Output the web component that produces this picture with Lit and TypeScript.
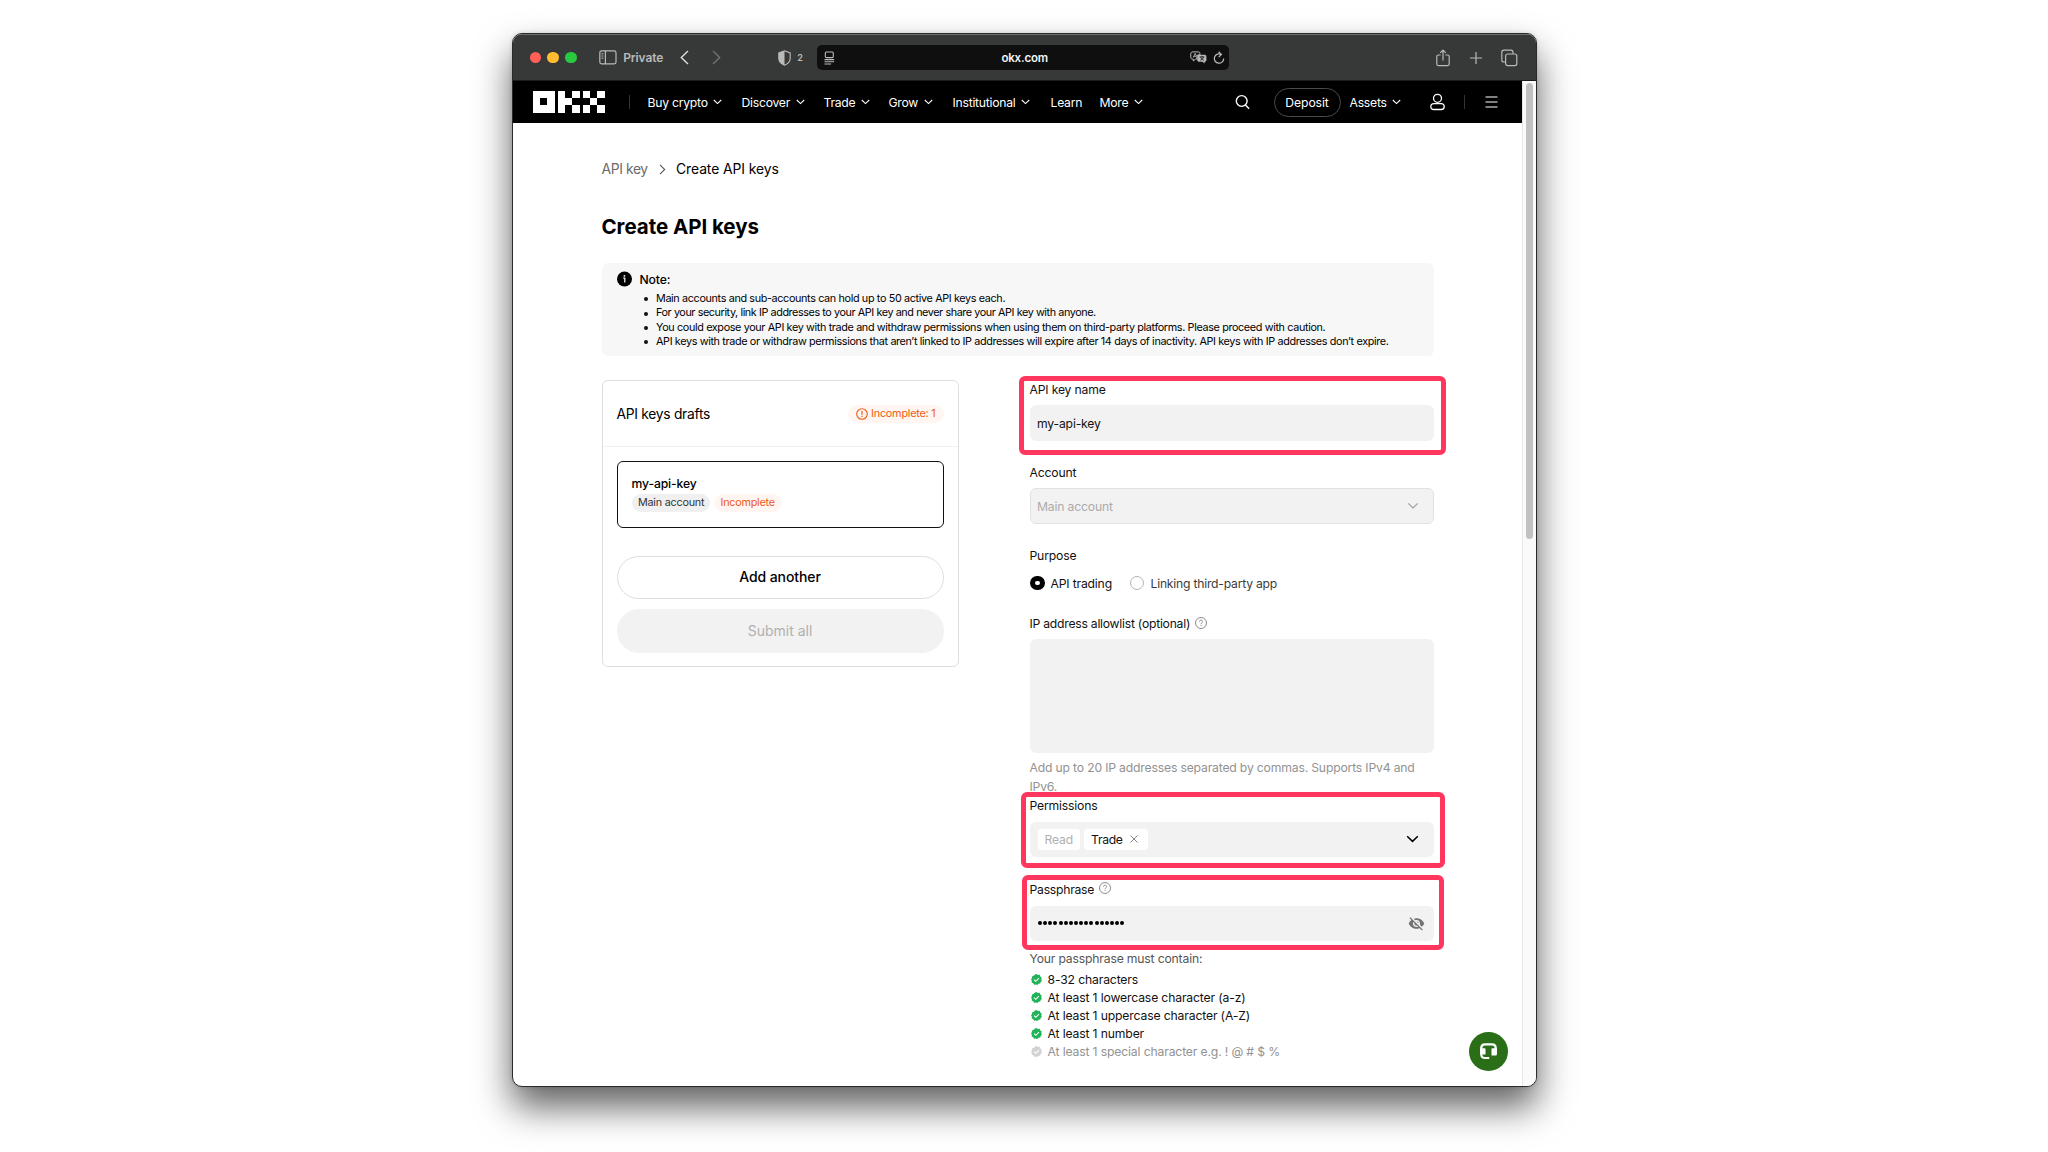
import { LitElement, html, css } from "lit";
import { customElement, property } from "lit/decorators.js";
import { classMap } from "lit/directives/class-map.js";

const NAV = [
  { label: "Buy crypto", menu: true, cls: "buy" },
  { label: "Discover", menu: true, cls: "discover" },
  { label: "Trade", menu: true, cls: "trade" },
  { label: "Grow", menu: true, cls: "grow" },
  { label: "Institutional", menu: true, cls: "inst" },
  { label: "Learn", menu: false, cls: "learn" },
  { label: "More", menu: true, cls: "more" },
];

const NOTES = [
  "Main accounts and sub-accounts can hold up to 50 active API keys each.",
  "For your security, link IP addresses to your API key and never share your API key with anyone.",
  "You could expose your API key with trade and withdraw permissions when using them on third-party platforms. Please proceed with caution.",
  "API keys with trade or withdraw permissions that aren’t linked to IP addresses will expire after 14 days of inactivity. API keys with IP addresses don’t expire.",
];

const RULES = [
  { text: "8-32 characters", met: true },
  { text: "At least 1 lowercase character (a-z)", met: true },
  { text: "At least 1 uppercase character (A-Z)", met: true },
  { text: "At least 1 number", met: true },
  { text: "At least 1 special character e.g. ! @ # $ %", met: false },
];

const chevron = html`<svg class="chev" viewBox="0 0 9 6" width="9" height="6"><path d="M.8 1 4.5 4.6 8.2 1" fill="none" stroke="currentColor" stroke-width="1.1"/></svg>`;

const help = html`<svg class="help" viewBox="0 0 12 12" width="12" height="12"><circle cx="6" cy="6" r="5.5" fill="none" stroke="#808080" stroke-width=".9"/><path d="M4.5 4.8c0-1 .6-1.6 1.5-1.6s1.6.5 1.6 1.4c0 1.1-1.5 1.1-1.5 2.2" fill="none" stroke="#808080" stroke-width=".9"/><rect x="5.6" y="7.8" width="1" height="1" fill="#808080"/></svg>`;

/* Safari toolbar */
@customElement("browser-toolbar")
export class BrowserToolbar extends LitElement {
  static styles = css`
    :host { display: flex; align-items: center; height: 45px; background: #373938; color: #b9bab9; border-top: 1px solid #6c6e6d; border-bottom: 1px solid #1c1c1c; box-sizing: content-box; }
    svg { display: block; flex: none; }
    .dots { display: flex; gap: 6.5px; margin-left: 17px; }
    .dot { width: 11.4px; height: 11.4px; border-radius: 50%; }
    .red { background: #ff5f57; }
    .yellow { background: #febc2e; }
    .green { background: #28c840; }
    .sidebar { margin-left: 22px; }
    .private { width: 42px; margin-left: 6.5px; font-size: 12px; font-weight: 600; letter-spacing: -0.12px; }
    .back { margin-left: 15px; color: #dcdcdc; }
    .fwd { margin-left: 23px; color: #717372; }
    .shield { margin-left: 57px; }
    .count { margin-left: 6px; width: 7px; font-size: 9px; font-weight: 600; }
    .url { display: flex; align-items: center; justify-content: space-between; width: 412px; height: 25px; margin-left: 13px; padding: 0 4px 0 7px; box-sizing: border-box; border-radius: 5px; background: #0e0f0e; }
    .host { flex: 1; padding-left: 24px; text-align: center; font-size: 11.5px; font-weight: 600; letter-spacing: -0.2px; color: #f4f4f4; }
    .tools { display: flex; align-items: center; gap: 6px; }
    .share { margin-left: 207px; }
    .plus { margin-left: 19.5px; }
    .tabs { margin-left: 19.5px; }
  `;
  render() {
    return html`
      <div class="dots"><i class="dot red"></i><i class="dot yellow"></i><i class="dot green"></i></div>
      <svg class="sidebar" width="18" height="15" viewBox="0 0 18 15" fill="none" stroke="currentColor" stroke-width="1.2"><rect x=".8" y=".9" width="16.2" height="13" rx="1.8"/><path d="M6.4 1v13"/><path d="M2.4 3.8h2M2.4 6h2M2.4 8.2h2" stroke-width="1"/></svg>
      <span class="private">Private</span>
      <svg class="back" width="9" height="15" viewBox="0 0 9 15" fill="none" stroke="currentColor" stroke-width="1.4"><path d="M8 1 1.3 7.5 8 14"/></svg>
      <svg class="fwd" width="9" height="15" viewBox="0 0 9 15" fill="none" stroke="currentColor" stroke-width="1.4"><path d="M1 1 7.7 7.5 1 14"/></svg>
      <svg class="shield" width="13" height="16" viewBox="0 0 13 16"><path d="M6.5.8 12.2 3v5.2c0 3.4-2.6 5.6-5.7 7C3.4 13.8.8 11.6.8 8.2V3z" fill="none" stroke="currentColor" stroke-width="1.1"/><path d="M6.5.8.8 3v5.2c0 3.4 2.6 5.6 5.7 7z" fill="currentColor"/></svg>
      <span class="count">2</span>
      <div class="url">
        <svg width="11" height="14" viewBox="0 0 11 14" fill="none" stroke="currentColor" stroke-width="1.1"><rect x="1.3" y="1" width="8" height="5.6" rx="1"/><path d="M.5 8.6h9.7M.5 10.8h9.7M.5 13h6.6"/></svg>
        <span class="host">okx.com</span>
        <div class="tools">
          <svg width="17" height="13" viewBox="0 0 17 13"><path d="M3 .9h5.2c1.2 0 1.700.6 1.700 1.600v1.300H8.600c-1.200 0-1.800.6-1.800 1.800v2.600H5.400L3.300 10V8.200C1.600 8.200.8 7.600.8 6.300V2.800C.8 1.500 1.600.9 3 .9z" fill="none" stroke="currentColor"/><path d="M3.200 6.600 5.200 2.400l1.300 2.800M3.900 5.300h2.300" fill="none" stroke="currentColor" stroke-width=".9"/><path d="M9.200 3.800h5.200c1.300 0 2 .7 2 1.900v3.200c0 1.200-.7 1.800-1.800 1.800v1.900l-2.200-1.900H9.200c-1.200 0-1.900-.6-1.900-1.800V5.700c0-1.200.7-1.900 1.900-1.900z" fill="currentColor"/><path d="M9.600 5.900h4.800M12 4.900v1M10.200 9.300c1.800-.6 2.800-1.700 3.200-3.400M10.600 6.200c.6 1.500 1.600 2.500 3.300 3.100" fill="none" stroke="#0e0f0e" stroke-width=".8"/></svg>
          <svg width="12" height="14" viewBox="0 0 12 14" fill="none" stroke="currentColor" stroke-width="1.2"><path d="M8.300 3.400A4.700 4.700 0 1 0 10.700 7.500"/><path d="M5.600.8 8.400 3.500 5.700 6.200"/></svg>
        </div>
      </div>
      <svg class="share" width="14" height="18" viewBox="0 0 14 18" fill="none" stroke="currentColor" stroke-width="1.2"><path d="M4.600 6H2.400C1.300 6 .8 6.500.8 7.500v7.600c0 1 .5 1.500 1.600 1.500h9.200c1.100 0 1.600-.5 1.600-1.500V7.500c0-1-.5-1.500-1.600-1.500H9.400"/><path d="M7 11.500V1.300M4.200 3.900 7 1.100l2.800 2.800"/></svg>
      <svg class="plus" width="12" height="12" viewBox="0 0 12 12" stroke="currentColor" stroke-width="1.2"><path d="M6 0v12M0 6h12"/></svg>
      <svg class="tabs" width="17" height="18" viewBox="0 0 17 18" fill="none" stroke="currentColor" stroke-width="1.2"><rect x="4.600" y="5" width="11.200" height="11.600" rx="2"/><path d="M4.400 13H3c-1.500 0-2.200-.7-2.200-2.100V3.200C.8 1.800 1.500 1.100 3 1.100h6.800c1.500 0 2.200.7 2.200 2.100v1.500"/></svg>
    `;
  }
}

/* Site navigation bar */
@customElement("site-nav")
export class SiteNav extends LitElement {
  static styles = css`
    :host { display: flex; align-items: center; height: 42px; background: #000; color: #fff; font-size: 12.2px; letter-spacing: -0.25px; }
    svg { display: block; flex: none; }
    .logo { margin-left: 20.5px; }
    .bar { flex: none; width: 1px; height: 14px; background: #333; }
    .bar.first { margin: 0 17.5px 0 24px; }
    .item { display: flex; align-items: center; gap: 5.5px; white-space: nowrap; flex: none; }
    .buy { width: 94px; } .discover { width: 82px; } .trade { width: 65px; } .grow { width: 64px; }
    .inst { width: 98px; } .learn { width: 49px; } .more { width: 42px; }
    .search { margin-left: 93px; }
    .deposit { display: flex; align-items: center; justify-content: center; box-sizing: border-box; width: 67px; height: 29px; margin-left: 24px; border: 1px solid #4a4a4a; border-radius: 15px; letter-spacing: -0.1px; }
    .assets { width: 52px; margin-left: 9px; }
    .user { margin-left: 28px; }
    .bar.last { margin: 0 20.5px 0 19px; }
  `;
  render() {
    return html`
      <svg class="logo" width="72" height="22" viewBox="0 0 72 22" fill="#fff" shape-rendering="crispEdges"><path fill-rule="evenodd" d="M0 0h21.600v21.600H0zM7.200 7.200v7.200h7.200V7.200z"/><path d="M25 0h7.200v7.200h7.200v7.200h-7.200v7.200H25zM39.400 0h7.200v7.200h-7.200zM39.400 14.400h7.200v7.200h-7.200z"/><path d="M50 0h7.200v7.200H50zM64.400 0h7.200v7.200h-7.200zM57.200 7.200h7.200v7.200h-7.200zM50 14.400h7.200v7.200H50zM64.400 14.400h7.200v7.200h-7.200z"/></svg>
      <i class="bar first"></i>
      ${NAV.map((n) => html`<span class="item ${n.cls}">${n.label}${n.menu ? chevron : ""}</span>`)}
      <svg class="search" width="15" height="16" viewBox="0 0 15 16" fill="none" stroke="#fff" stroke-width="1.4"><circle cx="6.700" cy="7" r="5.400"/><path d="m10.500 11 3.600 3.700"/></svg>
      <span class="deposit">Deposit</span>
      <span class="item assets">Assets${chevron}</span>
      <svg class="user" width="15" height="18" viewBox="0 0 15 18" fill="none" stroke="#fff" stroke-width="1.3"><circle cx="7.500" cy="5.300" r="4"/><path d="M4 10.600h7c2 0 3.200 1.200 3.200 3.100S13 16.500 11.300 16.500H3.700C2 16.500.8 15.600.8 13.700S2 10.600 4 10.600z"/></svg>
      <i class="bar last"></i>
      <svg width="13" height="14" viewBox="0 0 13 14" stroke="#fff" stroke-width="1.2"><path d="M.5 2h12M.5 7h12M.5 12h12"/></svg>
    `;
  }
}

/* Left-hand card with the list of key drafts */
@customElement("drafts-card")
export class DraftsCard extends LitElement {
  static styles = css`
    :host { display: block; box-sizing: border-box; width: 357px; height: 287px; border: 1px solid #dedede; border-radius: 6px; }
    .head { display: flex; align-items: center; justify-content: space-between; height: 65px; padding: 0 14px; border-bottom: 1px solid #eef1f5; font-size: 13.8px; letter-spacing: -0.27px; }
    .chip { display: inline-flex; align-items: center; box-sizing: border-box; height: 18px; border-radius: 9px; font-size: 10.8px; letter-spacing: -0.23px; white-space: nowrap; }
    .orange { background: #fff6f2; color: #ee5a14; }
    .count { gap: 3px; width: 95.5px; padding-left: 8px; letter-spacing: -0.2px; }
    .body { padding: 14px 14px 0; }
    .draft { box-sizing: border-box; height: 66.5px; padding: 13px 14px; border: 1px solid #111; border-radius: 6px; }
    .name { font-size: 12.2px; font-weight: 500; letter-spacing: -0.14px; line-height: 18px; }
    .tags { display: flex; gap: 4px; margin-top: 0.5px; }
    .main { width: 78px; padding-left: 6.5px; background: #f0f0f0; color: #333; }
    .inc { width: 68px; padding-left: 7px; }
    .btn { display: flex; align-items: center; justify-content: center; box-sizing: border-box; height: 43.5px; padding-bottom: 1.5px; border-radius: 22px; font-size: 14px; }
    .add { margin-top: 28px; border: 1px solid #dedede; font-weight: 500; letter-spacing: -0.08px; }
    .submit { margin-top: 10px; background: #f2f2f2; color: #b0b0b0; }
  `;
  render() {
    return html`
      <div class="head">
        <span>API keys drafts</span>
        <span class="chip orange count">
          <svg width="12" height="12" viewBox="0 0 12 12" fill="none" stroke="currentColor"><circle cx="6" cy="6" r="5.300" stroke-width="1.1"/><path d="M6 3v3.700M6 7.800v1.200" stroke-width="1.2"/></svg>Incomplete: 1</span>
      </div>
      <div class="body">
        <div class="draft">
          <div class="name">my-api-key</div>
          <div class="tags"><span class="chip main">Main account</span><span class="chip orange inc">Incomplete</span></div>
        </div>
        <div class="btn add">Add another</div>
        <div class="btn submit">Submit all</div>
      </div>
    `;
  }
}

@customElement("rule-item")
export class RuleItem extends LitElement {
  @property({ type: Boolean }) met = false;
  @property() text = "";
  static styles = css`
    :host { display: flex; align-items: center; gap: 5.5px; height: 17.9px; padding-left: 1.5px; letter-spacing: -0.15px; }
    svg { display: block; width: 11px; height: 11px; }
    .on { color: #1fb457; }
    .off { color: #d2d2d2; }
    .muted { color: #929292; }
  `;
  render() {
    return html`<svg class=${classMap({ on: this.met, off: !this.met })} viewBox="0 0 12 12"><path d="M6 0 7.600 1 9.400.9 10.200 2.600 11.600 3.800 11.300 5.600 11.900 7.300 10.600 8.600 10.100 10.400 8.300 10.700 6.900 12 5.200 11.400 3.400 11.600 2.400 10.100.8 9.200.9 7.400 0 5.800 1.100 4.300 1.300 2.500 3.100 1.900 4.300.5z" fill="currentColor"/><path d="M3.300 6.200 5.200 8 8.700 4.400" fill="none" stroke="#fff" stroke-width="1.2"/></svg><span class=${classMap({ muted: !this.met })}>${this.text}</span>`;
  }
}

/* Right-hand form */
@customElement("key-form")
export class KeyForm extends LitElement {
  static styles = css`
    :host { display: block; width: 404px; font-size: 12.2px; letter-spacing: -0.18px; color: #111; }
    svg { display: block; flex: none; }
    .field { position: relative; }
    .label { display: flex; align-items: center; gap: 5px; height: 19px; white-space: nowrap; }
    .ip { letter-spacing: -0.25px; }
    .help { margin-top: -2px; }
    .box { display: flex; align-items: center; box-sizing: border-box; height: 36px; margin-top: 6px; padding: 0 12px 0 7.5px; border-radius: 6px; background: #f2f2f2; }
    .grow { flex: 1; }
    .disabled { border: 1px solid #e2e2e2; padding: 0 14px 0 6.5px; color: #ababab; }
    .gap { margin-top: 22px; }
    .gap.wide { margin-top: 23px; }
    .radios { display: flex; align-items: center; height: 16px; margin-top: 10px; }
    .radio { width: 14.5px; height: 14.5px; box-sizing: border-box; border-radius: 50%; border: 1px solid #b5b5b5; }
    .checked { border: 5px solid #000; margin-left: 0.5px; }
    .r1 { width: 79px; margin-left: 6px; }
    .r2 { margin-left: 6.5px; color: #3c3c3c; letter-spacing: -0.23px; }
    .area { height: 114px; margin-top: 6px; border-radius: 6px; background: #f2f2f2; }
    .hint { margin-top: 4.5px; line-height: 19px; color: #929292; white-space: nowrap; }
    .perm { height: 35.5px; margin-top: 7px; gap: 4px; padding: 0 15px 0 8px; }
    .chip { display: flex; align-items: center; box-sizing: border-box; height: 21px; border-radius: 3px; background: #fff; }
    .read { width: 42px; padding-left: 7px; color: #b0b0b0; }
    .trade { width: 64px; padding-left: 7.5px; gap: 7px; letter-spacing: -0.3px; }
    .pass { margin-top: 22.5px; }
    .pass .label { letter-spacing: -0.25px; }
    .pass .box { height: 35px; margin-top: 7px; padding-left: 8.5px; padding-right: 9px; }
    .dots { display: flex; gap: 1.15px; }
    .dots i { width: 4px; height: 4px; border-radius: 50%; background: #000; }
    .must { margin-top: 9.5px; height: 18px; line-height: 18px; color: #555; }
    .rules { margin-top: 3px; color: #111; }
    .mark { position: absolute; box-sizing: border-box; border: 5px solid #ff375f; border-radius: 6px; pointer-events: none; }
    .m1 { left: -11px; top: -4.5px; width: 427px; height: 79px; }
    .m2 { left: -8.5px; top: -4px; width: 424px; height: 76.5px; }
    .m3 { left: -7.5px; top: -4.5px; width: 422px; height: 74.5px; }
  `;
  render() {
    return html`
      <div class="field">
        <div class="label">API key name</div>
        <div class="box">my-api-key</div>
        <div class="mark m1"></div>
      </div>
      <div class="field gap">
        <div class="label">Account</div>
        <div class="box disabled"><span class="grow">Main account</span>
          <svg width="12" height="8" viewBox="0 0 12 8"><path d="M1.300 1.300 6 6l4.700-4.700" fill="none" stroke="#a0a0a0" stroke-width="1.2"/></svg></div>
      </div>
      <div class="field gap">
        <div class="label">Purpose</div>
        <div class="radios"><i class="radio checked"></i><span class="r1">API trading</span><i class="radio"></i><span class="r2">Linking third-party app</span></div>
      </div>
      <div class="field gap wide">
        <div class="label ip">IP address allowlist (optional)${help}</div>
        <div class="area"></div>
        <div class="hint">Add up to 20 IP addresses separated by commas. Supports IPv4 and<br />IPv6.</div>
      </div>
      <div class="field">
        <div class="label">Permissions</div>
        <div class="box perm">
          <span class="chip read">Read</span>
          <span class="chip trade">Trade<svg width="8" height="8" viewBox="0 0 8 8"><path d="m.5.5 7 7m0-7-7 7" stroke="#777" stroke-width=".9"/></svg></span>
          <span class="grow"></span>
          <svg width="13" height="8" viewBox="0 0 13 8"><path d="M1.200 1.200 6.500 6.400l5.300-5.200" fill="none" stroke="#000" stroke-width="1.5"/></svg>
        </div>
        <div class="mark m2"></div>
      </div>
      <div class="field pass">
        <div class="label">Passphrase${help}</div>
        <div class="box">
          <span class="dots">${Array.from({ length: 17 }, () => html`<i></i>`)}</span><span class="grow"></span>
          <svg width="17" height="17" viewBox="0 0 24 24" fill="#747474"><path d="M12 7c2.760 0 5 2.240 5 5 0 .65-.13 1.260-.36 1.830l2.920 2.920c1.510-1.260 2.700-2.890 3.430-4.750-1.730-4.390-6-7.500-11-7.500-1.400 0-2.740.25-3.980.7l2.160 2.160C10.740 7.130 11.350 7 12 7zM2 4.270l2.280 2.280.46.46C3.080 8.300 1.780 10.020 1 12c1.730 4.390 6 7.500 11 7.500 1.550 0 3.030-.3 4.380-.84l.42.42L19.730 22 21 20.730 3.270 3 2 4.270zM7.530 9.800l1.550 1.550c-.05.21-.08.43-.08.65 0 1.660 1.340 3 3 3 .22 0 .44-.03.65-.08l1.550 1.550c-.67.33-1.410.53-2.200.53-2.760 0-5-2.240-5-5 0-.79.2-1.530.53-2.200zm4.310-.78 3.150 3.150.02-.16c0-1.660-1.340-3-3-3l-.17.01z"/></svg>
        </div>
        <div class="mark m3"></div>
      </div>
      <div class="must">Your passphrase must contain:</div>
      <div class="rules">${RULES.map((r) => html`<rule-item .met=${r.met} .text=${r.text}></rule-item>`)}</div>
    `;
  }
}

@customElement("app-root")
export class AppRoot extends LitElement {
  static styles = css`
    :host { display: block; box-sizing: border-box; width: 2048px; height: 1152px; padding: 33px 0 0 511.5px; overflow: hidden; background: #fff; font-family: Inter, "Liberation Sans", sans-serif; color: #000; }
    .window { box-sizing: border-box; width: 1025px; height: 1053.5px; border: 1px solid #2a2a2a; border-radius: 10px; box-shadow: 0 20px 36px rgba(0, 0, 0, 0.62), 0 0 4px rgba(0, 0, 0, 0.15); background: #fff; }
    .clip { display: flex; flex-direction: column; height: 100%; border-radius: 9px; overflow: hidden; }
    .view { display: flex; flex: 1; min-height: 0; }
    .page { position: relative; width: 1009px; }
    .track { flex: 1; box-sizing: border-box; padding: 2px 0 0 3px; border-left: 1px solid #e7e7e7; background: #fafafa; }
    .thumb { width: 7px; height: 456px; border-radius: 4px; background: #c1c1c1; }
    .content { width: 832px; padding: 36px 0 0 89px; }
    .crumbs { display: flex; align-items: center; height: 20px; font-size: 13.9px; letter-spacing: -0.08px; }
    .crumb { width: 46px; color: #6b6b6b; letter-spacing: -0.4px; white-space: nowrap; }
    .sep { margin: 0 10.5px 0 11px; }
    h1 { height: 30px; margin: 33px 0 0; font-size: 20.5px; line-height: 29px; font-weight: 650; letter-spacing: -0.04px; }
    .note { display: flex; box-sizing: border-box; height: 93px; margin-top: 21px; padding: 7.5px 0 0 15px; border-radius: 6px; background: #f7f7f7; }
    .note svg { display: block; margin-right: 8px; }
    .title { font-size: 12.2px; line-height: 17px; font-weight: 500; letter-spacing: -0.15px; }
    ul { margin: 4.5px 0 0; padding: 0 0 0 16px; font-size: 10.8px; line-height: 14.35px; letter-spacing: -0.355px; list-style: none; white-space: nowrap; }
    li { display: flex; align-items: center; margin-left: -12px; }
    li:nth-child(2) { letter-spacing: -0.41px; }
    .bullet { width: 4px; height: 4px; margin-right: 8.5px; border-radius: 50%; background: #111; }
    .cols { display: flex; justify-content: space-between; align-items: flex-start; margin-top: 24px; }
    .support { position: absolute; right: 13.5px; bottom: 14.5px; display: flex; align-items: center; justify-content: center; width: 39px; height: 39px; border-radius: 50%; background: #2a6f18; }
  `;
  render() {
    return html`
      <div class="window"><div class="clip">
        <browser-toolbar></browser-toolbar>
        <div class="view">
          <div class="page">
            <site-nav></site-nav>
            <div class="content">
              <div class="crumbs"><span class="crumb">API key</span>
                <svg class="sep" width="7" height="11" viewBox="0 0 7 11"><path d="m1 .8 4.700 4.700L1 10.200" fill="none" stroke="#555" stroke-width="1.1"/></svg>
                <span>Create API keys</span></div>
              <h1>Create API keys</h1>
              <div class="note">
                <svg width="15" height="16" viewBox="0 0 15 16"><circle cx="7.500" cy="8" r="7.500"/><path d="M6.100 7h1.700v4.500" fill="none" stroke="#fff" stroke-width="1.2"/><circle cx="7.400" cy="4.800" r=".9" fill="#fff"/></svg>
                <div>
                  <div class="title">Note:</div>
                  <ul>${NOTES.map((n) => html`<li><i class="bullet"></i>${n}</li>`)}</ul>
                </div>
              </div>
              <div class="cols"><drafts-card></drafts-card><key-form></key-form></div>
            </div>
            <div class="support"><svg width="17" height="17" viewBox="0 0 17 17"><path d="M1.300 11V5C1.300 2.500 2.700 1.300 5 1.300h7c2.300 0 3.700 1.200 3.700 3.700v6" fill="none" stroke="#fff" stroke-width="2.3"/><path d="M.2 5.200h4.400c.6 0 .9.300.9.900v5.300H.2zM16.800 5.200h-4.400c-.6 0-.9.300-.9.900v6.500h4.200c.7 0 1.100-.4 1.100-1.100z" fill="#fff"/><path d="M1.300 11v.8c0 2 1 3.100 3 3.100h4.900" fill="none" stroke="#fff" stroke-width="2"/></svg></div>
          </div>
          <div class="track"><div class="thumb"></div></div>
        </div>
      </div></div>
    `;
  }
}
